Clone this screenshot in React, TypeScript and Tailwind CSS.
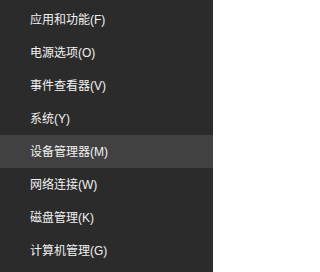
const items = [
  "应用和功能(F)",
  "电源选项(O)",
  "事件查看器(V)",
  "系统(Y)",
  "设备管理器(M)",
  "网络连接(W)",
  "磁盘管理(K)",
  "计算机管理(G)",
];

export default function App() {
  return (
    <div
      className="w-[213px] h-[272px] bg-[#2b2b2b] pt-[3px] overflow-hidden"
      style={{ fontFamily: '"Liberation Sans", "Noto Sans CJK SC", sans-serif' }}
    >
      {items.map((label, i) => (
        <div
          key={label}
          className={`h-[33px] flex items-center pl-[30px] text-[12px] text-[#f2f2f2] ${
            i === 4 ? "bg-[#414141]" : ""
          }`}
        >
          {label}
        </div>
      ))}
    </div>
  );
}
